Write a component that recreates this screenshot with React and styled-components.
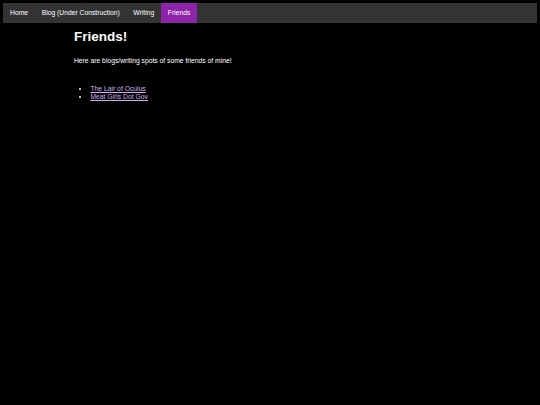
import React from "react";
import styled, { createGlobalStyle } from "styled-components";

const Global = createGlobalStyle`
  html, body { background: #000; }
  body {
    margin: 3.3px;
    color: #fff;
    font-family: "Liberation Sans", Arial, sans-serif;
    font-size: 6.75px;
  }
`;

const Nav = styled.ul`
  list-style: none;
  margin: 0;
  padding: 0;
  display: flex;
  background: #333;
`;

const NavItem = styled.li`
  display: block;
`;

const NavLink = styled.a`
  display: block;
  padding: 5.9px 6.8px;
  color: #fff;
  text-decoration: none;
  font-size: 6.75px;
  line-height: 7.8px;
  background: ${(p) => (p.$active ? "#8e24aa" : "transparent")};
`;

const Content = styled.main`
  padding-left: 70.7px;
`;

const Title = styled.h1`
  font-size: 13.5px;
  font-weight: bold;
  margin: 6.2px 0 12px;
  line-height: 15.5px;
`;

const Text = styled.p`
  margin: 0;
  font-size: 6.75px;
  line-height: 7.8px;
`;

const List = styled.ul`
  margin: 21px 0 0;
  padding-left: 16.5px;
  font-size: 6.75px;
  line-height: 7.9px;
`;

const FriendLink = styled.a`
  color: #d4aef0;
  text-decoration: underline;
`;

const items = ["Home", "Blog (Under Construction)", "Writing", "Friends"];

export default function App() {
  return (
    <>
      <Global />
      <Nav>
        {items.map((t) => (
          <NavItem key={t}>
            <NavLink href="#" $active={t === "Friends"}>
              {t}
            </NavLink>
          </NavItem>
        ))}
      </Nav>
      <Content>
        <Title>Friends!</Title>
        <Text>Here are blogs/writing spots of some friends of mine!</Text>
        <List>
          <li>
            <FriendLink href="#">The Lair of Oculus</FriendLink>
          </li>
          <li>
            <FriendLink href="#">Meat Girls Dot Gov</FriendLink>
          </li>
        </List>
      </Content>
    </>
  );
}
